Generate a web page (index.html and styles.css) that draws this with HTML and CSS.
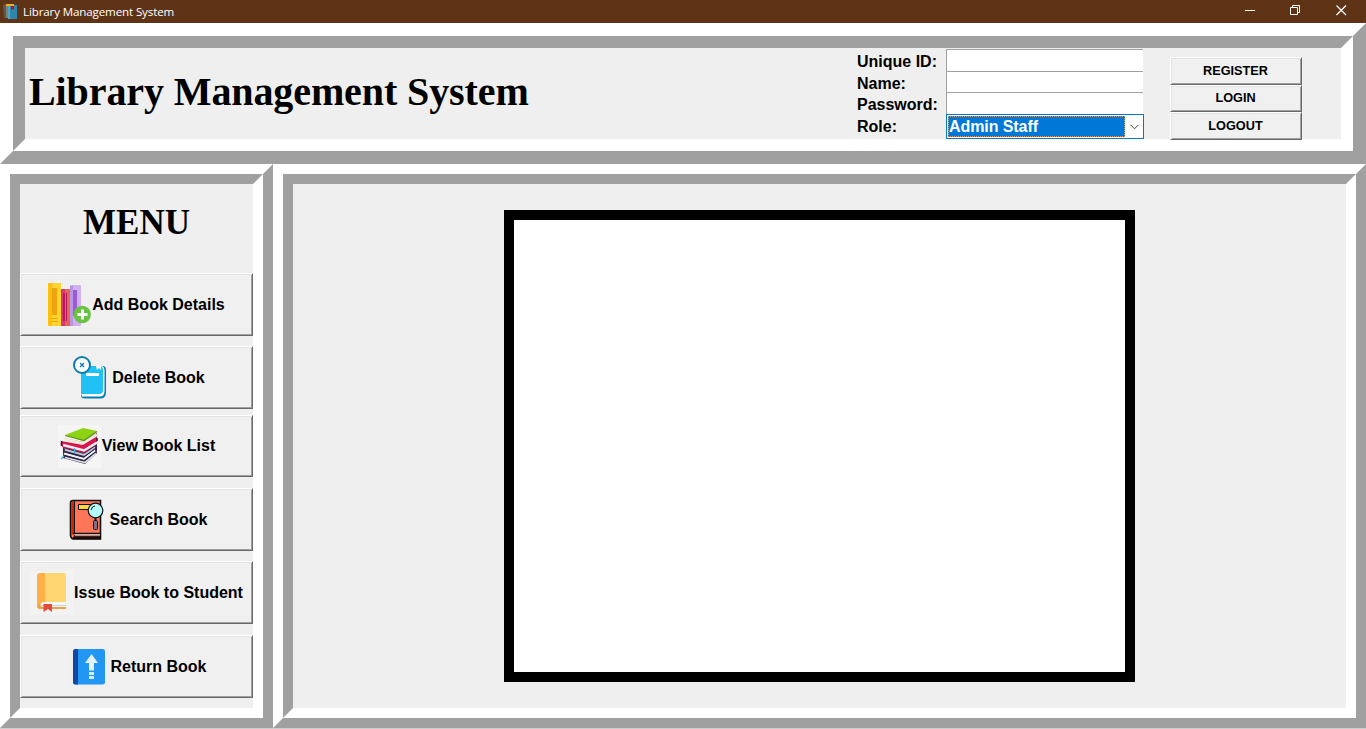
FILE: index.html
```html
<!DOCTYPE html>
<html lang="en">
<head>
<meta charset="utf-8">
<title>Library Management System</title>
<link rel="stylesheet" href="styles.css">
</head>
<body>
<div class="titlebar">
  <svg class="app-icon" width="16" height="18" viewBox="0 0 16 18">
    <path d="M0 3l3-1v14H1z" fill="#5d5a55"/><path d="M3 3h3v13H3z" fill="#8a7b68"/>
    <path d="M5 3h9v14H5z" fill="#2f86ad"/><path d="M5 3h2v14H5z" fill="#4fa6c4"/><path d="M3 2h8v2H3z" fill="#f2b01c"/>
    <path d="M8 4h3v4l-1.500-1L8 8z" fill="#c4101c"/>
  </svg>
  <span class="app-name">Library Management System</span>
  <svg class="win-controls" width="104" height="12" viewBox="0 0 104 12" fill="none" stroke="#fff">
    <path d="M0 5.500h10"/><path d="M45.500 2.500h7v7h-7zM47.500 2.500v-2h7v7h-2"/><path d="M91.500 .5l9.500 9.500M101 .5L91.500 10" stroke-width="1.200"/>
  </svg>
</div>
<header class="panel header">
  <div class="panel-inner header-inner">
    <h1 class="title">Library Management System</h1>
    <div class="form">
      <label class="lbl">Unique ID:</label><span class="entry"></span>
      <label class="lbl">Name:</label><span class="entry"></span>
      <label class="lbl">Password:</label><span class="entry last"></span>
      <label class="lbl">Role:</label>
      <div class="combo"><span class="selected">Admin Staff</span>
        <svg class="chevron" width="9" height="6" viewBox="0 0 9 6" fill="none" stroke="#444"><path d="M.5 .8l4 4 4-4"/></svg>
      </div>
    </div>
    <div class="auth">
      <button class="btn auth-btn">REGISTER</button>
      <button class="btn auth-btn short">LOGIN</button>
      <button class="btn auth-btn">LOGOUT</button>
    </div>
  </div>
</header>
<div class="body-row">
  <nav class="panel side">
    <div class="panel-inner side-inner">
      <h2 class="menu-title">MENU</h2>
      <button class="btn menu-btn">
        <svg class="icon" viewBox="0 0 43 43">
          <rect width="13" height="43" rx="1" fill="#fdc010"/><rect x="4" width="9" height="43" rx="1" fill="#ffd42e"/><rect x="4" y="5" width="5" height="27" fill="#f0a30e"/><path d="M3 35.500h7M3 38.500h7" stroke="#f0a30e"/>
          <path d="M13 6h9v37h-9z" fill="#e5664f"/><path d="M13 6h4v37h-4z" fill="#d83a78"/><path d="M15 10h2v28h-2zM18 10h1v28h-1z" fill="#b7185c"/>
          <rect x="22" y="2" width="11" height="41" rx="1" fill="#cfb1ee"/><path d="M22 3h3v40h-3z" fill="#b995e5"/><path d="M25 7h4v26h-4z" fill="#9b5bd3"/>
          <circle cx="34.200" cy="31.500" r="8.700" fill="#69c244"/><path d="M34.500 26.500v10M29.500 31.500h10" stroke="#fff" stroke-width="3"/>
        </svg><span>Add Book Details</span></button>
      <button class="btn menu-btn">
        <svg class="icon" viewBox="0 0 43 43">
          <path d="M35 10q3 0 3 4v22q0 6-5 6.500H17q-4 0-4-3V14z" fill="#0a7cae"/><path d="M34 10q2.500 1 2.500 4v21q0 5-4 5.500H14l-1-3V14z" fill="#fff"/>
          <path d="M13 10h18l3 1q1 1 1 3v20q0 4-4 4H13z" fill="#20c1f3"/><path d="M28 10l1 4 2-2 2 2v-4z" fill="#fff"/><rect x="18" y="17" width="13" height="3" rx="1" fill="#fff"/>
          <circle cx="14" cy="9" r="8" fill="#fff" stroke="#0a7cae" stroke-width="2"/><path d="M12 7l4 4M16 7l-4 4" stroke="#0a7cae" stroke-width="1.300"/>
        </svg><span>Delete Book</span></button>
      <button class="btn menu-btn view">
        <svg class="icon" viewBox="0 0 43 43">
          <path d="M0 0h43v43H0z" fill="#f5f5f5"/>
          <path d="M5 19l20 4 14-8v13l-12 11L5 33z" fill="#39314f"/>
          <path d="M7 32.500l20 5 11-9" fill="none" stroke="#d9dae5" stroke-width="1.800"/>
          <path d="M6 28.500l20 5.500 12-9" fill="none" stroke="#f0f2f7" stroke-width="2.200"/>
          <path d="M6 24.500l20 5.500 12-8" fill="none" stroke="#b9c3d7" stroke-width="2"/>
          <path d="M6 30.500l20 5 12-9M6 26.500l20 5.500 12-9" fill="none" stroke="#28213f"/>
          <path d="M3 16l22 4 14-9v8l-13 9L4 22z" fill="#d9144e"/>
          <path d="M5 20l21 5.500 13-8" fill="none" stroke="#f7eef2" stroke-width="2.500"/>
          <path d="M5 13l20 4 14-9v4l-13 8z" fill="#b41645"/>
          <path d="M6 14l19 4.300 14-8.500" fill="none" stroke="#f2eadc" stroke-width="2.800"/>
          <path d="M7 10L25 3l14 3-13 10z" fill="#8ed313"/><path d="M7 10.500l19 5 13-9" fill="none" stroke="#55931a" stroke-width="1.200"/>
          <path d="M3.500 16v5M39 13v3M38 21v5M6 24v3" stroke="#391b35" stroke-width="1.600"/><path d="M16.500 23v5M6 31l-3 3" stroke="#35b9df" stroke-width="1.300"/>
        </svg><span>View Book List</span></button>
      <button class="btn menu-btn search">
        <svg class="icon" viewBox="0 0 43 43">
          <path d="M7 2.500h27.500V41H7q-2.500-1-2.500-4V5q0-2.500 2.500-2.500z" fill="#ff7758" stroke="#111" stroke-width="1.600"/><path d="M5.300 4l3-1v33H7l-1.700 2z" fill="#cf2600"/><path d="M8.500 3v32" stroke="#111"/>
          <path d="M7 35.500h28M8 38h27" stroke="#111" stroke-width="1.400"/><path d="M9 37h25" stroke="#fff"/><path d="M7 40h28" stroke="#1a0b08" stroke-width="2.500"/>
          <path d="M12.500 6.500h13v5h-13z" fill="#ffd83d" stroke="#111"/><circle cx="29.500" cy="12.500" r="7.300" fill="#b5faff" stroke="#111" stroke-width="1.200"/><path d="M25 12q1-4 4-4" stroke="#111" fill="none"/>
          <path d="M29.500 20v3" stroke="#111" stroke-width="2"/><rect x="27.500" y="22.500" width="4" height="9" rx="1" fill="#77738b" stroke="#111"/>
        </svg><span>Search Book</span></button>
      <button class="btn menu-btn">
        <svg class="icon" viewBox="0 0 43 43">
          <path d="M0 0h43v43H0z" fill="#f3f3f3"/><path d="M10 30h26v8H10q-3 0-3-3z" fill="#f3a23b"/>
          <path d="M12 31h24v5H12q-3-2 0-5z" fill="#f4f7f8"/><path d="M10 34.500h26" stroke="#cbd3d8"/><path d="M10 2h5v29q-6 0-6 3l-2 1V5q0-3 3-3z" fill="#ffb047"/><path d="M15 2h19q2 0 2 2v27H15z" fill="#ffd66f"/>
          <path d="M13.500 33h8.500v8l-4-3-4.500 3z" fill="#e54b3c"/>
        </svg><span>Issue Book to Student</span></button>
      <button class="btn menu-btn return">
        <svg class="icon" viewBox="0 0 43 43">
          <path d="M2 2h39v39H2z" fill="#f0efef"/><rect x="6" y="4" width="32" height="35.500" rx="2.500" fill="#2196f3"/><path d="M8.500 4H11v35.500H8.500Q6 39.500 6 37V6.500Q6 4 8.500 4z" fill="#1048a3"/>
          <path d="M24.500 9l6.500 9h-4v7.500h-5V18h-4z" fill="#e3f2fd"/><path d="M22 27h5v3h-5zM22 31h5v3h-5z" fill="#d3eafc"/>
        </svg><span>Return Book</span></button>
    </div>
  </nav>
  <main class="panel main">
    <div class="panel-inner main-inner"><div class="canvas"></div></div>
  </main>
</div>
</body>
</html>
```
FILE: styles.css
```css
* { box-sizing: border-box; }
body { margin: 0; width: 1366px; height: 729px; overflow: hidden; background: #ccc; color: #000; font-family: "Liberation Sans", Arial, sans-serif; }
.titlebar { height: 23px; background: #5f3316; color: #fff; display: flex; align-items: center; padding-left: 3px; }
.app-icon { margin-top: -1px; }
.app-name { font: 11.600px/20px "Open Sans", sans-serif; margin-left: 4px; letter-spacing: -0.140px; }
.win-controls { margin: -2px 17px 0 auto; }
.panel, .panel-inner { border-style: solid; }
.panel { border-width: 10px; border-color: #fff #a0a0a0 #a0a0a0 #fff; }
.panel-inner { border-width: 10px; border-color: #a0a0a0 #fff #fff #a0a0a0; background: #efefef; height: 100%; }
.header { height: 141px; border-width: 13px; }
.header-inner { border-width: 12px; display: flex; align-items: flex-start; }
.title { margin: 20px 0 0 4px; width: 828px; font: bold 40px/48px "Liberation Serif", serif; letter-spacing: -0.100px; white-space: nowrap; }
.form { display: grid; grid-template-columns: 89px 198px; grid-template-rows: 22px 21px 22px 25px; padding-top: 1px; }
.lbl { font-weight: bold; font-size: 16px; line-height: 26px; white-space: nowrap; }
.entry { background: #fff; border-top: 1px solid #a0a0a0; border-left: 1px solid #a0a0a0; width: 197px; }
.combo { background: #fff; border: 1px solid #0078d7; display: flex; align-items: center; padding: 1px; }
.selected { width: 177px; height: 21px; background: #0078d7; outline: 1px dotted #e89347; outline-offset: -1px; color: #fff; font-weight: bold; font-size: 16px; line-height: 21px; padding-left: 1px; letter-spacing: -0.080px; }
.chevron { margin-left: 5px; }
.auth { margin: 9px 0 0 26px; width: 132px; display: flex; flex-direction: column; }
.btn { background: #f0f0f0; border: 1px solid; border-color: #fff #696969 #696969 #fff; box-shadow: inset 1px 1px #e3e3e3, inset -1px -1px #a0a0a0; padding: 0; color: #000; font-family: "Liberation Sans", Arial, sans-serif; font-weight: bold; white-space: nowrap; }
.auth-btn { height: 28px; font-size: 12.700px; flex: none; padding-right: 1px; }
.auth-btn.short { height: 27px; padding-bottom: 1px; }
.body-row { height: 564px; display: flex; }
.side { width: 273px; }
.side-inner { display: flex; flex-direction: column; }
.menu-title { margin: 18px 0 29px; height: 42px; text-align: center; font: bold 35px/42px "Liberation Serif", serif; }
.menu-btn { height: 63px; flex: none; display: flex; align-items: center; justify-content: center; font-size: 16px; margin-bottom: 10px; }
.menu-btn:nth-of-type(2) { margin-bottom: 6px; }
.view { height: 62px; margin-bottom: 11px; }
.return { margin-top: 1px; }
.icon { width: 43px; height: 43px; flex: none; margin-right: 1px; }
.main { width: 1093px; }
.main-inner { padding: 26px 0 0 211px; }
.canvas { width: 631px; height: 472px; border: 10px solid #000; background: #fff; }
```
